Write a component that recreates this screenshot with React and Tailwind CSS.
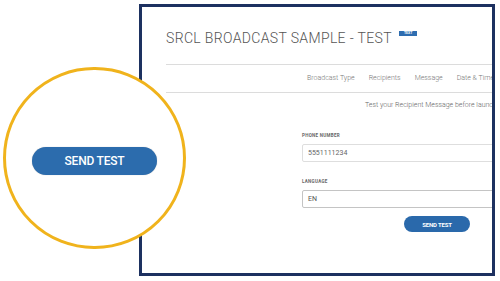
import React from "react";

const navItems = ["Broadcast Type", "Recipients", "Message", "Date & Time"];

const App = () => {
  return (
    <div className="relative w-[500px] h-[281px] overflow-hidden bg-white font-['Roboto',sans-serif]">
      {/* screenshot frame */}
      <div className="absolute left-[139px] top-[4px] w-[356px] h-[272px] border-[3px] border-[#1d3160] overflow-hidden bg-white">
        <div className="w-[460px] pl-[24px] pt-[22px]">
          <div className="flex items-start gap-[7px]">
            <h1 className="text-[14px] leading-[18px] tracking-[0.35px] text-[#555] font-light">
              SRCL BROADCAST SAMPLE - TEST
            </h1>
            <span className="mt-[2px] bg-[#2e6db0] text-white text-[3.5px] leading-[5px] px-[5px] font-bold">
              TEXT
            </span>
          </div>

          <div className="mt-[17px] border-t border-b border-[#dcdcdc] h-[29px] flex items-center gap-[14px] pl-[141px] text-[7px] text-[#777] font-light">
            {navItems.map((item) => (
              <span key={item} className="whitespace-nowrap">{item}</span>
            ))}
          </div>

          <p className="mt-[7px] pl-[199px] text-[7px] leading-[10px] text-[#666] font-light whitespace-nowrap">
            Test your Recipient Message before launching
          </p>

          <div className="pl-[136px] mt-[23px] w-[410px]">
            <div className="w-[270px]">
              <label className="block text-[4.5px] leading-[6px] font-bold text-[#666] tracking-[0.3px]">
                PHONE NUMBER
              </label>
              <div className="mt-[5px] h-[18px] border border-[#dedede] rounded-[2px] flex items-center px-[5px] text-[7px] text-[#666]">
                5551111234
              </div>
              <label className="block mt-[17px] text-[4.5px] leading-[6px] font-bold text-[#666] tracking-[0.3px]">
                LANGUAGE
              </label>
              <div className="mt-[5px] h-[18px] border border-[#c4c4c4] rounded-[2px] flex items-center px-[5px] text-[7px] text-[#555]">
                EN
              </div>
              <div className="mt-[8px] flex justify-center">
                <button className="w-[66px] h-[16px] rounded-full bg-[#2a69ab] text-white text-[6px] font-bold tracking-tight">
                  SEND TEST
                </button>
              </div>
            </div>
          </div>
        </div>
      </div>

      {/* magnifier circle */}
      <div className="absolute left-[3px] top-[67px] w-[183px] h-[182px] rounded-full border-[3px] border-[#f0b31c] bg-white flex items-center justify-center">
        <button className="mt-[5px] w-[125px] h-[28px] rounded-full bg-[#2c6cad] text-white text-[12px] font-medium tracking-[-0.2px] shadow-[0_0_1px_rgba(0,0,0,0.3)]">
          SEND TEST
        </button>
      </div>
    </div>
  );
};

export default App;
